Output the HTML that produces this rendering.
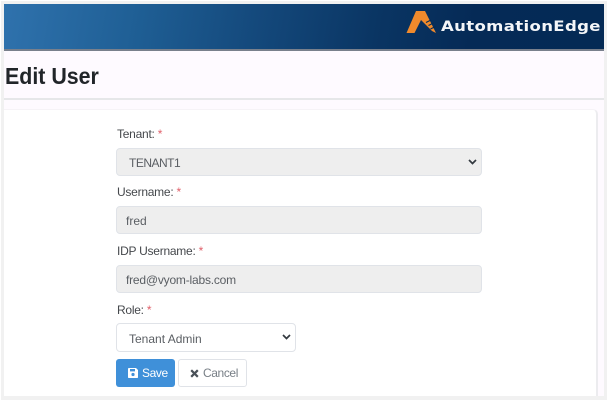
<!DOCTYPE html>
<html><head><meta charset="utf-8">
<style>
html,body{margin:0;padding:0;background:#fff}
body{width:608px;height:401px;position:relative;overflow:hidden;font-family:"Liberation Sans",sans-serif;font-size:12px;color:#495057}
.a{position:absolute;box-sizing:border-box;white-space:nowrap}
.lab{color:#45484c;left:117px;font-size:12px;line-height:14px;letter-spacing:-.25px}
.lab i{color:#e0606a;font-style:normal}
.f{left:116px;border:1px solid #e0e3e8;border-radius:4px;background:#eee;height:28px;line-height:29px;font-size:12px;color:#5a5e63}
.chev{position:absolute;right:4px;top:10px}
</style></head><body>
<div class="a" style="left:1px;top:1px;width:606px;height:399px;background:#f1f1f1"></div>
<div class="a" style="left:4px;top:4px;width:600px;height:46px;background:linear-gradient(100deg,#2f72ad 0%,#1f5f95 22%,#14497c 42%,#0a3563 62%,#052a56 78%,#042a55 100%)"></div>
<div class="a" style="left:4px;top:49px;width:600px;height:2px;background:#79808c"></div>
<div class="a" style="left:4px;top:51px;width:600px;height:345px;background:#fefaff"></div>
<div class="a" style="left:4px;top:98px;width:600px;height:2px;background:#e6e7e9"></div>
<div class="a" style="left:4px;top:109px;width:594px;height:287px;background:#fff;border-right:2px solid #ececef;border-top:1px solid #f6f3f7;border-top-right-radius:5px"></div>
<div class="a" style="left:5px;top:61px;font-size:23.5px;line-height:30px;font-weight:bold;color:#212529;transform-origin:left;transform:scaleX(.91)">Edit User</div>

<svg class="a" style="left:405px;top:10px" width="34" height="25" viewBox="0 0 34 25"><path d="M1.5 23 L11 1 H20 L31 23 L27 21 L16 10 L9.5 23 Z" fill="#f08a2c"/><path d="M21 12.5l5-2.5M23.5 15.5l5-2.5M25.5 19l5-2.5" stroke="#042a55" stroke-width="1.1"/></svg>
<div class="a" style="left:441px;top:16px;font-size:14.5px;line-height:22px;color:#f4f6f9;letter-spacing:.3px;font-family:'DejaVu Sans',sans-serif;font-weight:bold;transform-origin:left;transform:scaleX(1.14)">AutomationEdge</div>

<div class="a lab" style="top:127px">Tenant: <i>*</i></div>
<div class="a f" style="top:148px;width:366px;padding-left:12px;letter-spacing:-.5px">TENANT1<svg class="chev" width="9" height="6" viewBox="0 0 9 6"><path d="M1 1l3.5 3.5L8 1" fill="none" stroke="#343a40" stroke-width="1.7"/></svg></div>
<div class="a lab" style="top:185px">Username: <i>*</i></div>
<div class="a f" style="top:206px;width:366px;padding-left:9px">fred</div>
<div class="a lab" style="top:244px">IDP Username: <i>*</i></div>
<div class="a f" style="top:265px;width:366px;padding-left:9px;letter-spacing:-.2px">fred@vyom-labs.com</div>
<div class="a lab" style="top:303px">Role: <i>*</i></div>
<div class="a f" style="top:323px;width:180px;height:29px;padding-left:12px;background:#fff;line-height:30px">Tenant Admin<svg class="chev" width="9" height="6" viewBox="0 0 9 6"><path d="M1 1l3.5 3.5L8 1" fill="none" stroke="#343a40" stroke-width="1.7"/></svg></div>

<div class="a" style="left:116px;top:359px;width:59px;height:28px;background:#3f90d9;border-radius:3px;color:#fff;line-height:29px;padding-left:26px;font-size:12px;letter-spacing:-.4px">Save
<svg style="position:absolute;left:11px;top:8px" width="12" height="12" viewBox="0 0 12 12"><path d="M1 1.8C1 1.4 1.4 1 1.8 1H9L11 3V10.2C11 10.6 10.6 11 10.2 11H1.8C1.4 11 1 10.6 1 10.2Z" fill="#fff"/><rect x="3" y="2" width="5" height="2.4" fill="#3f90d9"/><circle cx="6" cy="7.5" r="1.6" fill="#3f90d9"/></svg></div>
<div class="a" style="left:178px;top:359px;width:69px;height:28px;background:#fff;border:1px solid #e0e3e8;border-radius:3px;color:#787f86;line-height:27px;padding-left:24px;font-size:12px;letter-spacing:-.4px">Cancel
<svg style="position:absolute;left:11px;top:9px" width="9" height="9" viewBox="0 0 9 9"><path d="M1.2 1.2l6.6 6.6M7.8 1.2L1.2 7.8" stroke="#495057" stroke-width="2.2"/></svg></div>
</body></html>
